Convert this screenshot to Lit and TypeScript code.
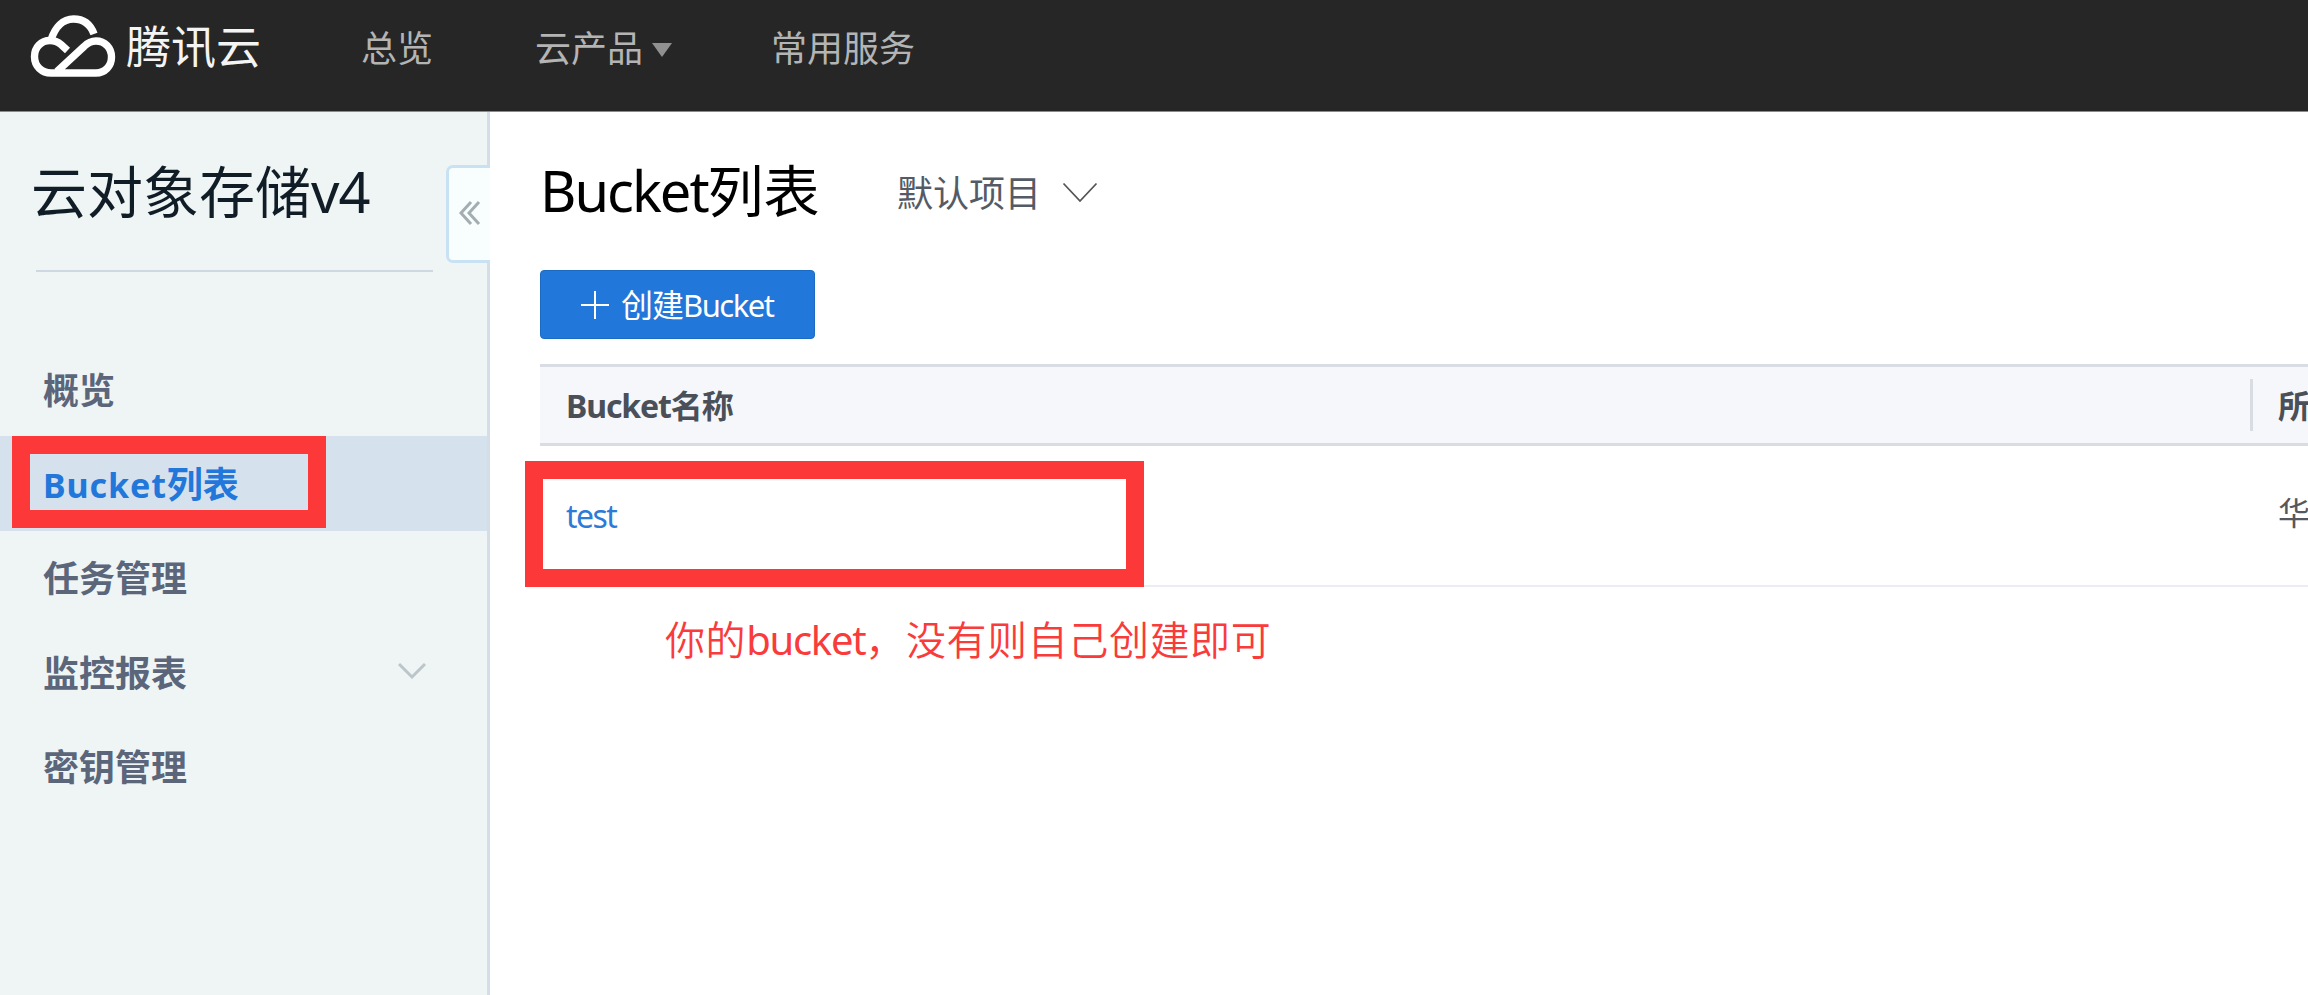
import { LitElement, html, css, nothing } from 'lit';
import { customElement, property } from 'lit/decorators.js';
import { classMap } from 'lit/directives/class-map.js';

interface MenuEntry {
  latin?: string;
  label: string;
  active?: boolean;
  expandable?: boolean;
}

@customElement('cloud-header')
export class CloudHeader extends LitElement {
  static styles = css`
    :host { display: block; }
    .bar {
      box-sizing: border-box;
      height: 112px;
      background: #262626;
      border-bottom: 1px solid #8a8b8b;
      display: flex;
      align-items: flex-start;
      color: #b4b4b4;
      font-size: 36px;
      line-height: 52px;
      white-space: nowrap;
    }
    .logo { display: flex; padding: 15px 0 0 30px; width: 361px; box-sizing: border-box; }
    .logo svg { flex: none; }
    .brand { margin: 1px 0 0 9px; color: #f4f4f4; font-size: 45px; line-height: 62px; }
    nav { display: flex; padding-top: 23px; }
    .products { display: flex; margin-left: 102px; }
    .products svg { margin: 20px 0 0 9px; }
    .common { margin-left: 99px; }
  `;
  render() {
    return html`
      <header class="bar">
        <div class="logo">
          <svg width="87" height="63" viewBox="0 0 87 63" fill="none" stroke="#fff" stroke-width="7.4">
            <path d="M21 25C25 12 33 4 43.500 4C54 4 60.500 9.500 64 19"/>
            <path d="M37.500 35.500L31 29.500C27.500 26.500 24.500 25.500 20 25.500C11 25.500 4.500 32.500 4.500 41.500C4.500 51.500 12 58 21 58H66C75 58 81.500 51 81.500 42C81.500 33 75 26 66 26C61 26 57.500 28 54 31.500L27 56.500"/>
          </svg>
          <div class="brand">腾讯云</div>
        </div>
        <nav>
          <div>总览</div>
          <div class="products">云产品
            <svg width="20" height="14" viewBox="0 0 20 14"><path d="M0 0H20L10 14Z" fill="#909090"/></svg>
          </div>
          <div class="common">常用服务</div>
        </nav>
      </header>`;
  }
}

@customElement('side-menu')
export class SideMenu extends LitElement {
  @property({ attribute: false }) entries: MenuEntry[] = [];
  static styles = css`
    :host { display: block; flex: none; width: 490px; }
    .side {
      position: relative;
      box-sizing: border-box;
      height: 100%;
      background: #eff5f5;
      border-right: 3px solid #d5dee6;
      white-space: nowrap;
    }
    .title {
      box-sizing: border-box;
      height: 158px;
      padding: 43px 0 0 31px;
      font-size: 56px;
      line-height: 72px;
      color: #101c26;
    }
    .title span { letter-spacing: -1px; }
    .rule { height: 2px; width: 397px; margin-left: 36px; background: #cdd8e1; }
    .menu { padding-top: 70px; }
    .item {
      position: relative;
      box-sizing: border-box;
      height: 94.4px;
      padding: 3px 61px 0 43px;
      display: flex;
      align-items: center;
      font-size: 36px;
      font-weight: 700;
      line-height: 50px;
      color: #5b667b;
    }
    .item.active { background: #d5e1ed; color: #2277da; }
    .latin { font-size: 34px; letter-spacing: 0.9px; }
    .arrow { margin: -6px 0 0 auto; }
    .mark {
      position: absolute;
      left: 12px;
      top: 0;
      width: 314px;
      height: 92px;
      box-sizing: border-box;
      border: 18px solid #fd3838;
    }
    .collapse {
      position: absolute;
      left: 446px;
      top: 53px;
      width: 44px;
      height: 98px;
      box-sizing: border-box;
      background: #f8fefe;
      border: 3px solid #c8e1f3;
      border-right: 0;
      border-radius: 7px 0 0 7px;
      padding: 32px 0 0 9px;
    }
    .collapse svg { display: block; }
  `;
  render() {
    return html`
      <aside class="side">
        <div class="title">云对象存储<span>v4</span></div>
        <div class="rule"></div>
        <div class="menu">
          ${this.entries.map((e) => html`
            <div class=${classMap({ item: true, active: !!e.active })}>
              <div>${e.latin ? html`<span class="latin">${e.latin}</span>` : nothing}${e.label}</div>
              ${e.expandable ? html`
                <svg class="arrow" width="28" height="18" viewBox="0 0 28 18" fill="none" stroke="#bcc5c9" stroke-width="3"><path d="M1 2L14 15L27 2"/></svg>` : nothing}
              ${e.active ? html`<div class="mark"></div>` : nothing}
            </div>`)}
        </div>
        <div class="collapse">
          <svg width="24" height="26" viewBox="0 0 24 26" fill="none" stroke="#a3adb2" stroke-width="3"><path d="M13 2L3 13L13 24M21 2L11 13L21 24"/></svg>
        </div>
      </aside>`;
  }
}

@customElement('bucket-panel')
export class BucketPanel extends LitElement {
  static styles = css`
    :host { display: block; flex: 1; min-width: 0; }
    .panel { padding-left: 50px; white-space: nowrap; }
    .head { display: flex; height: 158px; }
    h1 { margin: 0; padding: 42px 0 0 0; width: 357px; font-weight: 400; font-size: 56px; line-height: 72px; color: #000; }
    h1 span { letter-spacing: -2px; }
    .project { padding-top: 57px; font-size: 36px; line-height: 50px; color: #555b66; }
    .head svg { margin: 70px 0 0 21px; }
    .create {
      box-sizing: border-box;
      width: 275px;
      height: 69px;
      display: flex;
      align-items: center;
      padding: 0 0 0 40px;
      background: #2277da;
      border: 1px solid #1b6bc4;
      border-radius: 4px;
      color: #fff;
      font-size: 32px;
      line-height: 46px;
      letter-spacing: -1px;
    }
    .create svg { margin-right: 12px; }
    .create span { font-size: 31px; letter-spacing: -1.5px; }
    .row { display: grid; grid-template-columns: 1710px 1fr; box-sizing: border-box; }
    .thead {
      margin-top: 25px;
      height: 82px;
      align-items: center;
      background: #f5f7fa;
      border-top: 3px solid #d9dde3;
      border-bottom: 3px solid #d9dde3;
      font-size: 32px;
      font-weight: 700;
      line-height: 46px;
      color: #4a4f58;
    }
    .cell { padding: 2px 0 0 26px; letter-spacing: -1.1px; overflow: hidden; }
    .thead .cell + .cell { box-sizing: border-box; height: 52px; padding-left: 25px; line-height: 50px; border-left: 3px solid #d9dde3; }
    .tbody { position: relative; height: 141px; padding-top: 42px; border-bottom: 2px solid #ebedf3; font-size: 32px; line-height: 46px; color: #55585f; }
    .tbody .cell + .cell { padding-left: 28px; }
    .tbody .link { padding-top: 5px; color: #2d7bd6; letter-spacing: -1.6px; }
    .mark {
      position: absolute;
      left: -15px;
      top: 15px;
      width: 619px;
      height: 126px;
      box-sizing: border-box;
      border: 18px solid #fd3838;
    }
    .note { padding: 23px 0 0 125px; font-size: 40px; line-height: 60px; letter-spacing: 0.6px; color: #f93b3b; font-weight: 350; }
    .note span { letter-spacing: -1.3px; font-weight: 400; }
  `;
  render() {
    return html`
      <main class="panel">
        <div class="head">
          <h1><span>Bucket</span>列表</h1>
          <div class="project">默认项目</div>
          <svg width="36" height="21" viewBox="0 0 36 21" fill="none" stroke="#555" stroke-width="1.8"><path d="M1.500 1.500L18 19L34.500 1.500"/></svg>
        </div>
        <div class="create">
          <svg width="28" height="28" viewBox="0 0 28 28" stroke="#fff" stroke-width="2"><path d="M14 0V28M0 14H28"/></svg>
          <div>创建<span>Bucket</span></div>
        </div>
        <div class="row thead">
          <div class="cell">Bucket名称</div>
          <div class="cell">所</div>
        </div>
        <div class="row tbody">
          <div class="cell link">test</div>
          <div class="cell">华</div>
          <div class="mark"></div>
        </div>
        <div class="note">你的<span>bucket</span>，没有则自己创建即可</div>
      </main>`;
  }
}

@customElement('app-root')
export class AppRoot extends LitElement {
  static styles = css`
    :host {
      display: flex;
      flex-direction: column;
      height: 995px;
      overflow: hidden;
      background: #fff;
      font-family: "Noto Sans", "Noto Sans CJK SC", sans-serif;
    }
    .body { flex: 1; display: flex; min-height: 0; }
  `;
  private entries: MenuEntry[] = [
    { label: '概览' },
    { latin: 'Bucket', label: '列表', active: true },
    { label: '任务管理' },
    { label: '监控报表', expandable: true },
    { label: '密钥管理' },
  ];
  render() {
    return html`
      <cloud-header></cloud-header>
      <div class="body">
        <side-menu .entries=${this.entries}></side-menu>
        <bucket-panel></bucket-panel>
      </div>`;
  }
}
